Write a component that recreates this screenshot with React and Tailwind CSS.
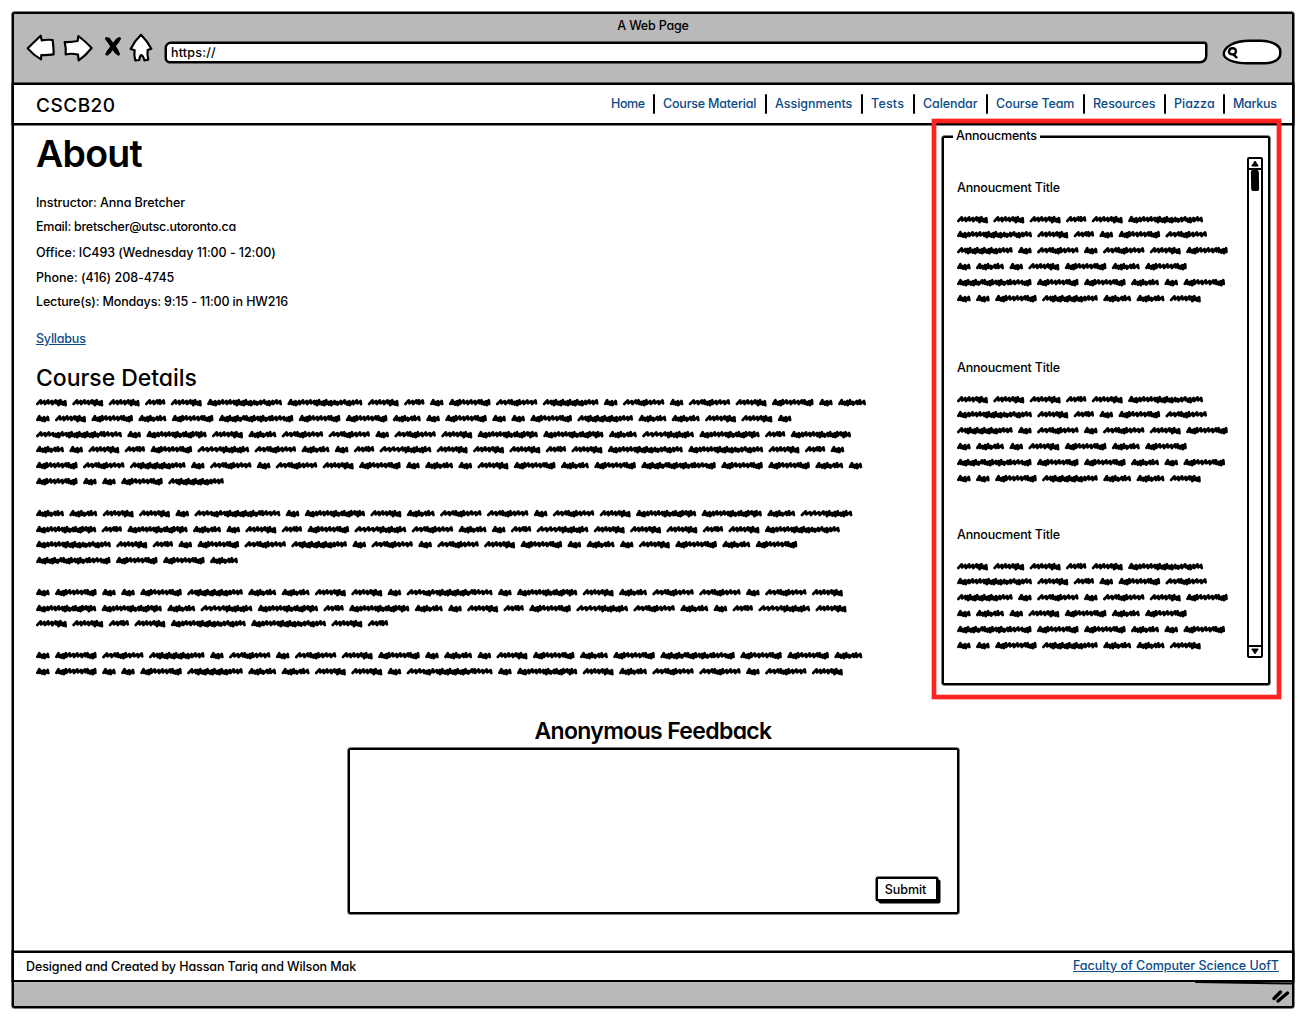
import React from "react";

// Scribbled placeholder words: [width, strokes], "s" = loose stroke, "d" = dense stroke
const WORDS = {
  a: [31, "sssssdddd"],
  b: [20.4, "sssds"],
  c: [75, "dddsssssdddddddsdssddsss"],
  d: [13.7, "ddds"],
  e: [41.7, "ddddsssssdddd"],
  f: [28, "dddddsds"],
  g: [74.6, "ddddddddsddddsdddsdsssddd"],
  h: [86, "ssssddssddddddddddddsdssss"],
  i: [60.3, "dddsssssdddsddddsdds"],
  j: [41.5, "sssddddssss"],
  k: [51.8, "sssssdddddddds"],
  l: [55.7, "ssdddddddddddddssss"],
};
const GAP = 5.34;

function wordPath(key, x0) {
  const [w, steps] = WORDS[key];
  const raw = [...steps].map((s) => (s === "s" ? 4.4 : 2.8));
  const total = raw.reduce((p, c) => p + c, 0);
  const k = (w - 2.8) / total;
  let x = x0 + 1.4;
  let d = `M${x.toFixed(1)} 6.9`;
  raw.forEach((r, i) => {
    const step = r * k;
    const loose = r === 4.4;
    const top = loose ? 3.4 + (i % 2) * 0.7 : 3.3 + ((i * 2) % 3) * 0.8;
    const bot = loose ? 6.3 + (i % 2) * 0.7 : 6.9 + (i % 3) * 0.6;
    d += `L${(x + step * 0.85).toFixed(1)} ${top.toFixed(1)}L${(x + step).toFixed(1)} ${bot.toFixed(1)}`;
    x += step;
  });
  return d;
}

function Line({ words }) {
  let x = 0;
  let d = "";
  for (const k of words) {
    d += wordPath(k, x);
    x += WORDS[k][0] + GAP;
  }
  return (
    <svg className="block h-[15.82px] overflow-visible" width={Math.ceil(x)} fill="none" stroke="#000" strokeWidth="2.8" strokeLinecap="round" strokeLinejoin="round">
      <path d={d} />
    </svg>
  );
}

function Scribble({ lines }) {
  return <div>{lines.map((l, i) => (l ? <Line key={i} words={l} /> : <div key={i} className="h-[15.82px]" />))}</div>;
}

const DETAILS = [
  "aaabaccabdejldjdjaedf", "daefegeefdeddelffaad", "hdiafjjdjaiifkibi", "fdabekjfdbkaaabaccabd",
  "ejldjdjaedfdaefegeefd", "eddel", "", "ffaadhdiafjjdjaiifk", "ibifdabekjfdbkaaabac", "cabdejldjdjaedfdaefe",
  "geef", "", "deddelffaadhdiafjjdja", "iifkibifdabekjfdbka", "aabaccab", "", "dejldjdjaedfdaefegeef", "deddelffaadhdiafjjdja",
];
const NEWS = ["aaabac", "cabdej", "ldjdjae", "dfdaefe", "geefde", "ddelffa"];

const NAV = [
  ["Home", "w-[52px] tracking-[-0.4px]"],
  ["Course Material", "w-[112px] tracking-[-0.2px]"],
  ["Assignments", "w-[96px] tracking-[-0.02px]"],
  ["Tests", "w-[52px] tracking-[0.2px]"],
  ["Calendar", "w-[73px] tracking-[-0.1px]"],
  ["Course Team", "w-[97px] tracking-[-0.14px]"],
  ["Resources", "w-[81px] tracking-[-0.06px]"],
  ["Piazza", "w-[59px] tracking-[0.05px]"],
  ["Markus", "w-[44px] tracking-[-0.3px]"],
];

const FACTS = [
  ["Instructor: Anna Bretcher", "h-6 tracking-[-0.09px]"],
  ["Email: bretscher@utsc.utoronto.ca", "h-[26px] tracking-[-0.25px]"],
  ["Office: IC493 (Wednesday 11:00 - 12:00)", "h-[25px] tracking-[-0.07px]"],
  ["Phone: (416) 208-4745", "h-6 tracking-[-0.01px]"],
  ["Lecture(s): Mondays: 9:15 - 11:00 in HW216", "h-[37px] tracking-[-0.16px]"],
];

function ToolbarIcons() {
  return (
    <svg className="ml-[10px] h-[32px] w-[130px]" viewBox="72 96 390 96" fill="#fff" stroke="#000" strokeWidth="6.5" strokeLinecap="round" strokeLinejoin="round">
      <path d="M83 145L122 107L125 121Q142 118 158 120Q161 142 161 163Q142 166 124 165L123 178Q100 165 83 145Z" />
      <path d="M194 126Q214 127 233 123L235 108Q257 125 275 144Q258 166 236 181L234 164Q214 159 197 163Q199 145 194 126Z" />
      <g strokeWidth="10" fill="none">
        <path d="M320 116Q345 137 355 162" />
        <path d="M358 116Q338 140 321 162" />
        <path d="M325 119L350 156M353 121L326 156" strokeWidth="13" />
      </g>
      <path d="M423 104Q442 123 454 146L443 150Q441 166 445 179L433 181Q430 167 424 165Q419 168 418 180L406 181Q401 166 404 151L392 147Q404 122 423 104Z" />
    </svg>
  );
}

function ScrollBar() {
  return (
    <div className="absolute top-[19px] right-[5px] flex h-[501px] w-[16px] flex-col items-center rounded-[2px] border-2 border-black">
      <svg className="h-[9px] w-[8px] shrink-0" viewBox="0 0 8 9"><path d="M4 2L7.2 7H0.8Z" stroke="#000" strokeLinejoin="round" /></svg>
      <div className="flex w-full flex-1 justify-center border-y-2 border-black">
        <div className="h-[21px] w-[8px] -rotate-1 rounded-[2px] bg-black" />
      </div>
      <svg className="h-[9px] w-[8px] shrink-0" viewBox="0 0 8 9"><path d="M4 6.8L0.8 2H7.2Z" stroke="#000" strokeLinejoin="round" /></svg>
    </div>
  );
}

function News({ className }) {
  return (
    <article className={className}>
      <h3 className="mb-[17.6px] tracking-[-0.18px]">Annoucment Title</h3>
      <Scribble lines={NEWS} />
    </article>
  );
}

export default function App() {
  return (
    <div className="h-[1022px] w-[1315px] overflow-hidden bg-white px-3 pt-3 text-[12.5px] leading-[16px] font-medium text-black [font-feature-settings:'cv11'] [font-family:Inter,sans-serif]">
      <div className="flex h-[996px] w-[1282px] flex-col rounded-[2px] border-2 border-black shadow-[0_0_0_0.5px_#000]">
        <header className="h-[69px] shrink-0 bg-[#b9b9b9]">
          <div className="flex h-6 items-center justify-center tracking-[-0.2px]">A Web Page</div>
          <div className="flex h-[28px] items-center">
            <div className="-mt-[8px] h-[32px] w-[151px] shrink-0"><ToolbarIcons /></div>
            <div className="flex h-[21px] w-[1042px] items-center rounded-[6px_3px_7px_5px] border-[2.5px] border-black bg-white pt-[2px] pl-[4px] tracking-[0.2px] shadow-[0_0_0_0.5px_#000]">https://</div>
            <div className="ml-[16px] flex h-[24px] w-[58px] items-center border-[2.5px] border-black bg-white pl-[2px] shadow-[0_0_0_0.5px_#000] [border-radius:26px_20px_16px_24px/14px_11px_10px_10px]">
              <svg className="h-[13px] w-[12px]" viewBox="0 0 12 13" fill="none" stroke="#000" strokeWidth="2.4" strokeLinecap="round"><path d="M2 5.5Q2.4 2 6 2.2Q9.4 2.6 8.8 6Q8 8.8 5 8.4Q2 8 2 5.5ZM6.4 8.4L9.4 11.4" /></svg>
            </div>
          </div>
        </header>

        <nav className="-mx-[2px] flex h-[42px] shrink-0 items-center justify-between border-2 border-black bg-white pr-[15px] pl-[22px] shadow-[0_0_0_0.5px_#000]">
          <span className="mt-[3px] text-[19px] tracking-[0.5px]">CSCB20</span>
          <ul className="flex text-[#0a4b87]">
            {NAV.map(([label, cls], i) => (
              <li key={label} className={"flex h-5 items-center justify-between whitespace-nowrap " + cls}>
                {label}
                {i < NAV.length - 1 && <span className="mr-2 h-5 w-0.5 rounded-full bg-black" />}
              </li>
            ))}
          </ul>
        </nav>

        <main className="flex min-h-0 flex-1 flex-col">
          <div className="flex h-[574px] shrink-0 justify-between pr-[11px] pl-[22px]">
            <section>
              <h1 className="mt-[9px] mb-[21px] h-[40px] text-[37.5px] leading-[40px] font-semibold tracking-[-0.75px]">About</h1>
              {FACTS.map(([t, cls]) => <p key={t} className={cls}>{t}</p>)}
              <p className="h-[32px] tracking-[-0.2px] text-[#0a4b87]"><span className="underline underline-offset-1">Syllabus</span></p>
              <h2 className="h-[34px] text-[23px] leading-[30px] tracking-[-0.05px]">Course Details</h2>
              <Scribble lines={DETAILS} />
            </section>

            <aside className="relative -mt-[6px] h-[580px] w-[349px] border-4 border-[#ff241f] p-[6px] pt-[13px] shadow-[0_0_0_0.6px_rgba(255,36,31,0.6),inset_0_0_0_0.6px_rgba(255,36,31,0.6)]">
              <div className="relative h-[549px] w-[328px] rounded-[2px] border-2 border-black shadow-[0_0_0_0.5px_#000]">
                <span className="absolute -top-[10px] left-[9px] bg-white px-[3px] tracking-[-0.2px]">Annoucments</span>
                <div className="pt-[42px] pl-[13px]">
                  <News className="h-[180px]" />
                  <News className="h-[167px]" />
                  <News />
                </div>
                <ScrollBar />
              </div>
            </aside>
          </div>

          <section className="flex flex-col items-center pt-[17px]">
            <h2 className="mb-[2px] text-[23px] leading-[30px] font-semibold tracking-[-0.65px]">Anonymous Feedback</h2>
            <div className="flex h-[166px] w-[611px] items-end justify-end rounded-[2px] border-2 border-black pr-[19px] pb-[11px] shadow-[0_0_0_0.5px_#000]">
              <button className="h-[24px] w-[62px] rounded-[2px] border-2 border-black bg-white pt-px pr-[2px] tracking-[-0.05px] shadow-[2.5px_2.5px_0_0_#000,0_0_0_0.5px_#000]">Submit</button>
            </div>
          </section>
        </main>

        <footer className="-mx-[2px] flex h-[31px] shrink-0 items-center justify-between border-2 border-black bg-white pr-[13px] pl-3 shadow-[0_0_0_0.5px_#000]">
          <span className="tracking-[-0.1px]">Designed and Created by Hassan Tariq and Wilson Mak</span>
          <span className="-mt-[2px] tracking-[-0.03px] text-[#0a4b87] underline underline-offset-1">Faculty of Computer Science UofT</span>
        </footer>
        <div className="flex h-6 shrink-0 justify-end bg-[#b9b9b9]">
          <svg className="h-6 w-[100px]" viewBox="0 0 100 24" stroke="#000" strokeLinecap="round" fill="none">
            <path d="M4 0L100 1.6" strokeWidth="2" />
            <path d="M82 16.5L88.5 10M86 19L95.5 11" strokeWidth="3.4" />
          </svg>
        </div>
      </div>
    </div>
  );
}
